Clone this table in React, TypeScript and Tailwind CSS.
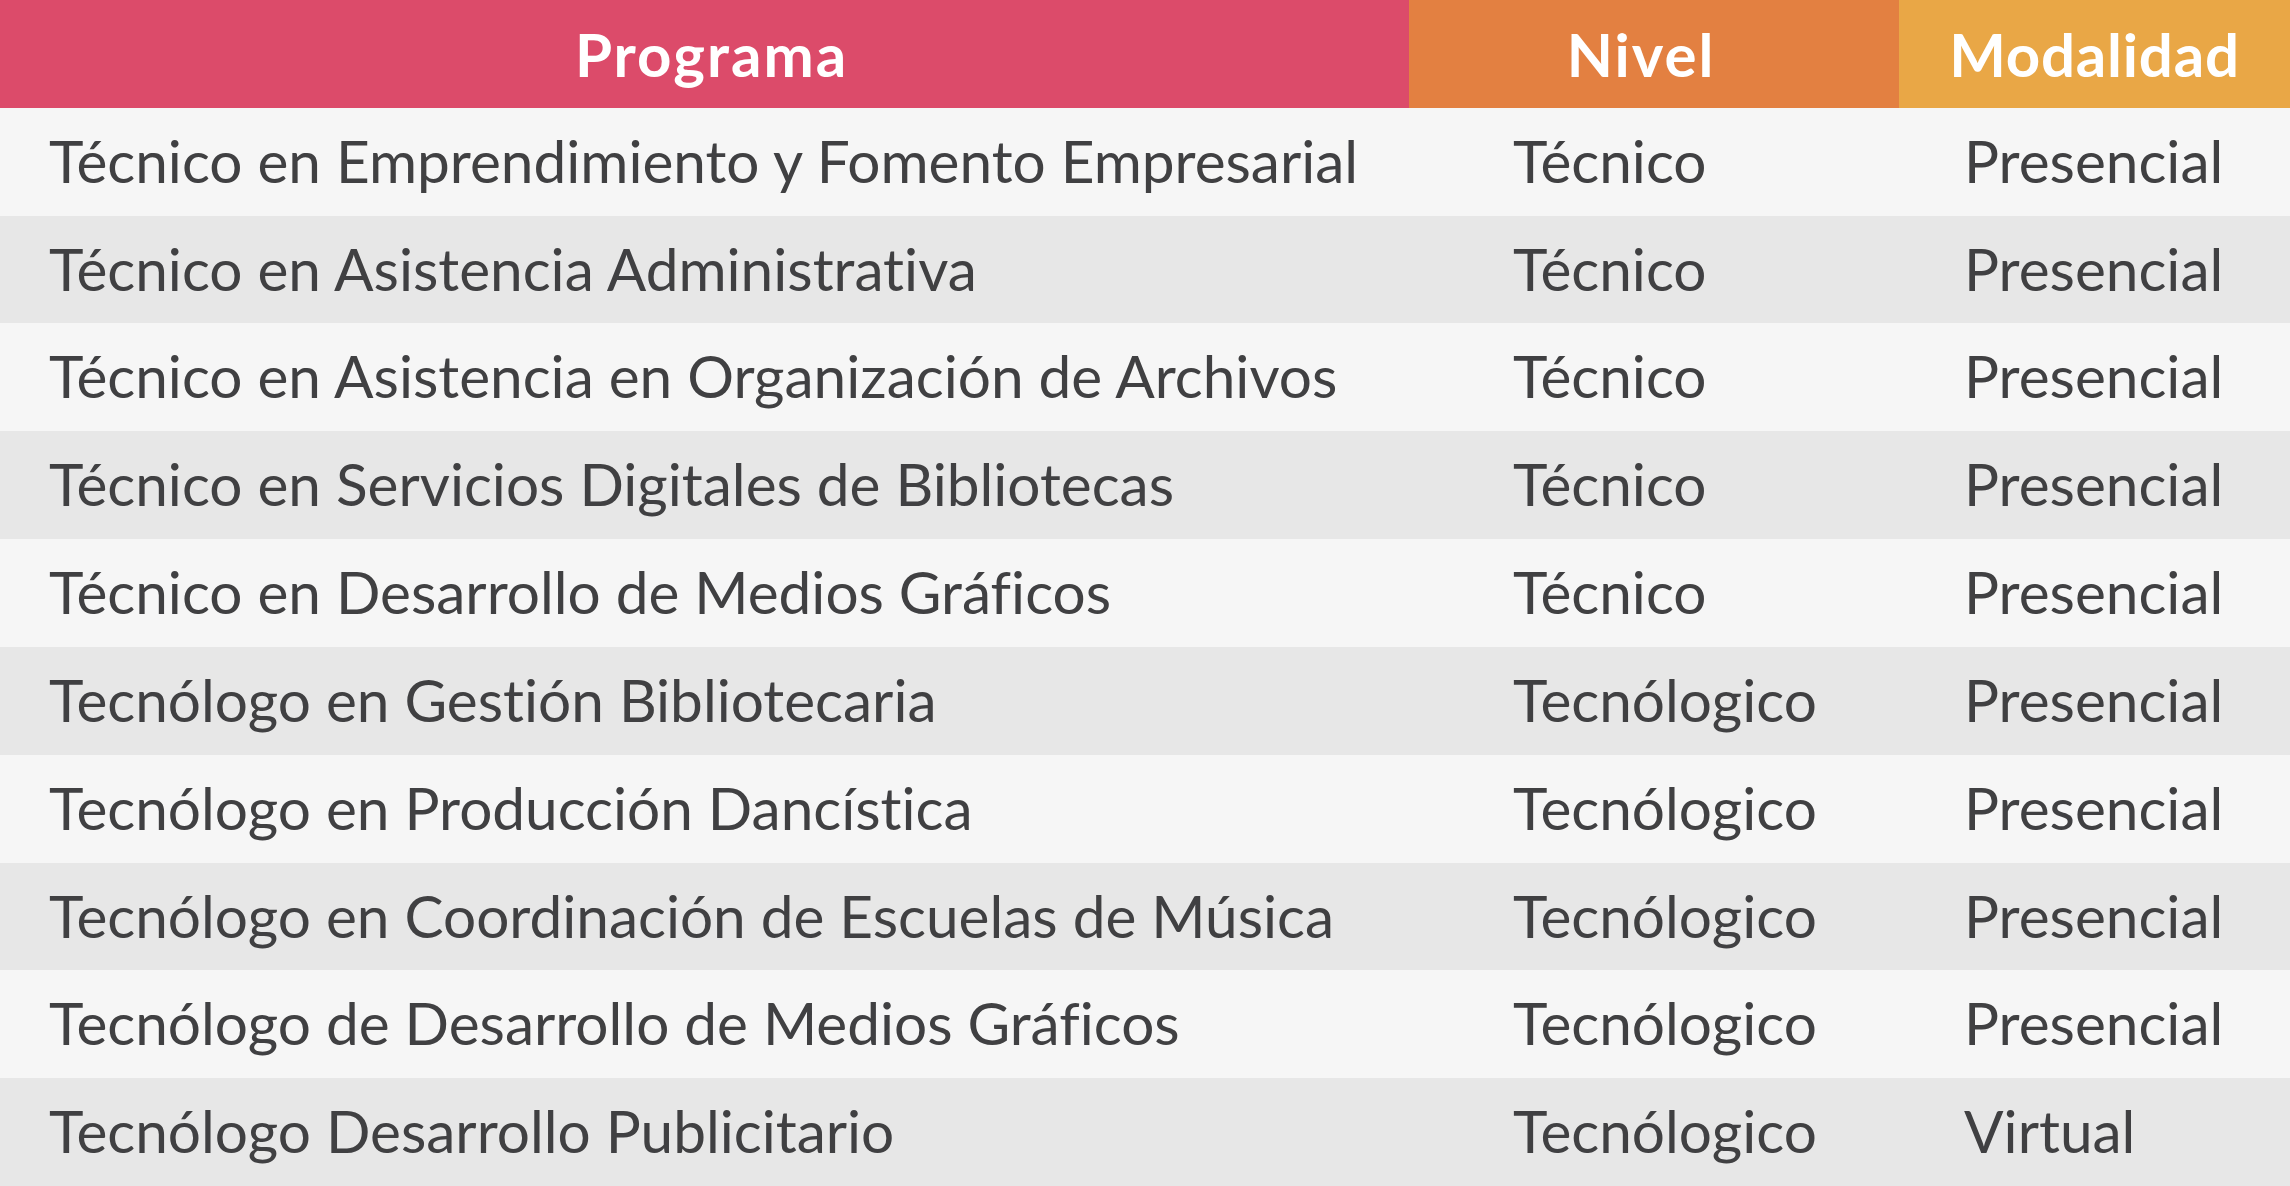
import React from 'react';

const rows = [
  { programa: 'Técnico en Emprendimiento y Fomento Empresarial', nivel: 'Técnico', modalidad: 'Presencial' },
  { programa: 'Técnico en Asistencia Administrativa', nivel: 'Técnico', modalidad: 'Presencial' },
  { programa: 'Técnico en Asistencia en Organización de Archivos', nivel: 'Técnico', modalidad: 'Presencial' },
  { programa: 'Técnico en Servicios Digitales de Bibliotecas', nivel: 'Técnico', modalidad: 'Presencial' },
  { programa: 'Técnico en Desarrollo de Medios Gráficos', nivel: 'Técnico', modalidad: 'Presencial' },
  { programa: 'Tecnólogo en Gestión Bibliotecaria', nivel: 'Tecnólogico', modalidad: 'Presencial' },
  { programa: 'Tecnólogo en Producción Dancística', nivel: 'Tecnólogico', modalidad: 'Presencial' },
  { programa: 'Tecnólogo en Coordinación de Escuelas de Música', nivel: 'Tecnólogico', modalidad: 'Presencial' },
  { programa: 'Tecnólogo de Desarrollo de Medios Gráficos', nivel: 'Tecnólogico', modalidad: 'Presencial' },
  { programa: 'Tecnólogo Desarrollo Publicitario', nivel: 'Tecnólogico', modalidad: 'Virtual' },
];

export default function App() {
  return (
    <div className="w-[2290px] h-[1186px] grid grid-cols-[1409px_490px_391px] grid-rows-[repeat(11,minmax(0,1fr))] font-['Lato',sans-serif] [font-variant-ligatures:none] overflow-hidden">
      {/* Header */}
      <div className="bg-[#dc4b6a] flex items-center justify-center text-white font-bold text-[60px] tracking-[2px] pl-[14px]">Programa</div>
      <div className="bg-[#e38041] flex items-center justify-center text-white font-bold text-[60px] tracking-[2px] pr-[26px]">Nivel</div>
      <div className="bg-[#e9a746] flex items-center justify-center text-white font-bold text-[60px] tracking-[0.8px]">Modalidad</div>

      {rows.map((row, idx) => {
        const bg = idx % 2 === 0 ? 'bg-[#f6f6f6]' : 'bg-[#e7e7e7]';
        return (
          <React.Fragment key={idx}>
            <div className={`${bg} flex items-center pl-[49px] pb-[2px] text-[58.5px] text-[#404042] whitespace-nowrap`}>{row.programa}</div>
            <div className={`${bg} flex items-center pl-[104px] pb-[2px] text-[58.5px] text-[#404042] whitespace-nowrap`}>{row.nivel}</div>
            <div className={`${bg} flex items-center pl-[65px] pb-[2px] text-[58.5px] text-[#404042] whitespace-nowrap`}>{row.modalidad}</div>
          </React.Fragment>
        );
      })}
    </div>
  );
}
